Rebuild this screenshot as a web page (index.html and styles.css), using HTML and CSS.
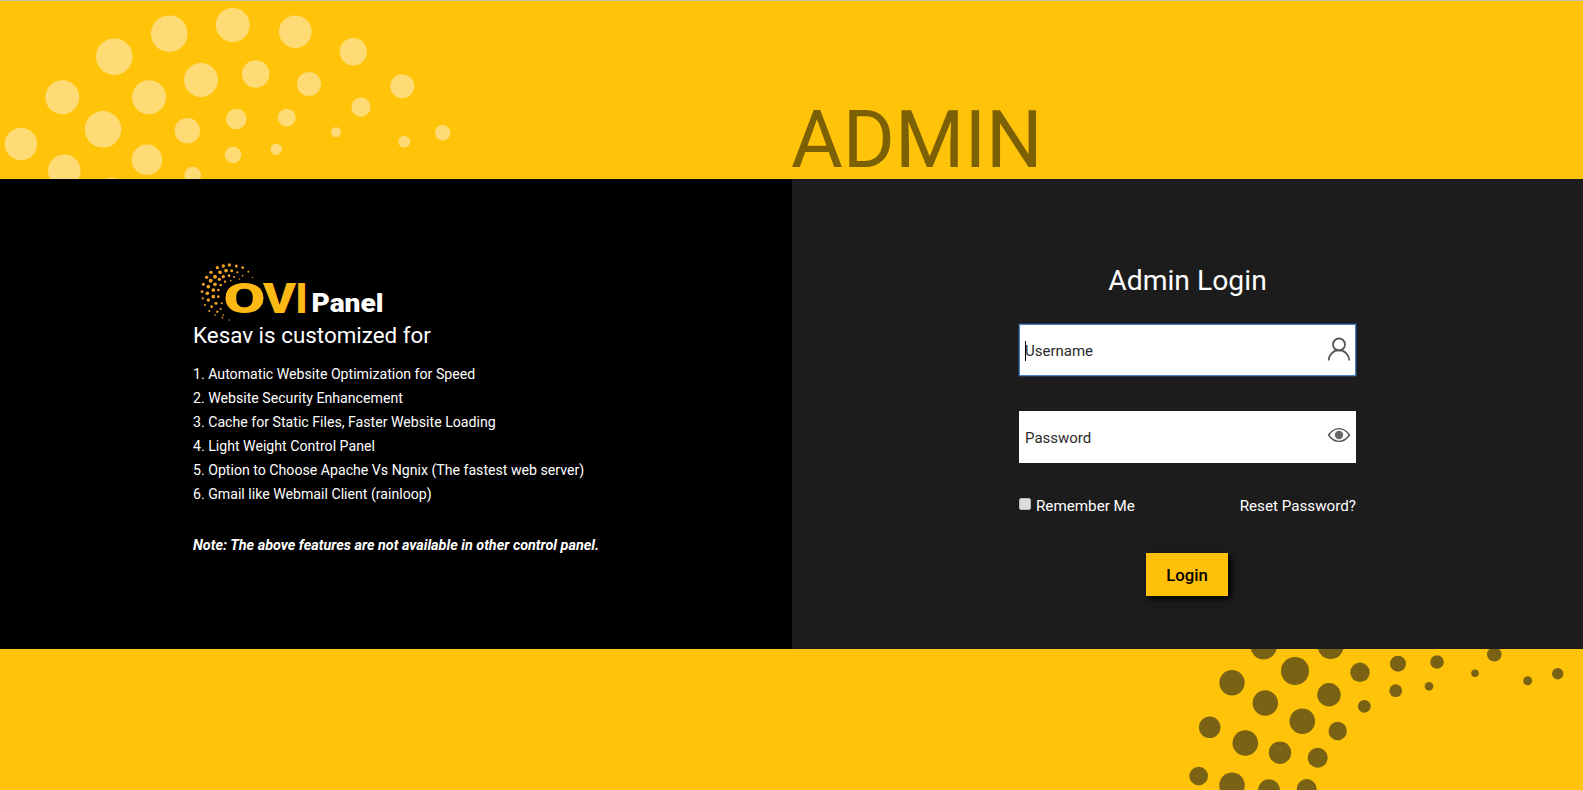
FILE: index.html
```html
<!DOCTYPE html>
<html lang="en">
<head>
<meta charset="utf-8">
<title>Admin Login</title>
<link rel="stylesheet" href="styles.css">
</head>
<body>
<div class="page">
  <header class="band band-top">
    <svg class="dots dots-light" viewBox="0 0 470 178" width="470" height="178" aria-hidden="true">
      <g transform="translate(0,-1)">
      <circle cx="21" cy="144" r="16.3"/><circle cx="62.3" cy="97.3" r="17"/><circle cx="114.3" cy="56.7" r="18.3"/><circle cx="169.3" cy="33.7" r="18.3"/><circle cx="232.7" cy="25" r="17"/><circle cx="295.3" cy="31.7" r="16.3"/><circle cx="353.3" cy="51.7" r="13.7"/><circle cx="402.3" cy="86.3" r="12"/><circle cx="442.7" cy="132.7" r="7.7"/><circle cx="404.3" cy="141.7" r="6"/><circle cx="361" cy="107" r="9.7"/><circle cx="336" cy="132.3" r="5"/><circle cx="309" cy="84" r="12"/><circle cx="286.7" cy="117.7" r="9"/><circle cx="276.3" cy="149.3" r="5.7"/><circle cx="255.7" cy="74" r="13.7"/><circle cx="236.3" cy="119" r="10.3"/><circle cx="233" cy="155" r="8.3"/><circle cx="201" cy="80" r="17"/><circle cx="149" cy="97.3" r="17"/><circle cx="103" cy="129.3" r="18.3"/><circle cx="187.3" cy="130.7" r="12.7"/><circle cx="147" cy="159.7" r="15.3"/><circle cx="64.3" cy="170.7" r="16.3"/><circle cx="192.7" cy="175" r="8.3"/><circle cx="111.7" cy="186.7" r="9"/>
      </g>
    </svg>
    <h1 class="band-title">ADMIN</h1>
  </header>

  <main class="main">
    <section class="info">
      <svg class="logo" viewBox="3 0 210 67" width="210" height="67" role="img" aria-label="OVI Panel">
        <g class="logo-dots" transform="scale(.33333)">
          <circle cx="118" cy="30" r="5"/><circle cx="100" cy="33" r="5"/><circle cx="82" cy="38" r="5"/><circle cx="63" cy="52" r="5"/><circle cx="50" cy="67" r="5"/><circle cx="40" cy="88" r="4.5"/><circle cx="36" cy="110" r="4"/><circle cx="38" cy="130" r="3.5"/><circle cx="45" cy="150" r="3"/><circle cx="58" cy="168" r="3"/><circle cx="75" cy="180" r="2.5"/><circle cx="97" cy="188" r="2.5"/><circle cx="118" cy="195" r="2"/><circle cx="139" cy="33" r="4.5"/><circle cx="158" cy="38" r="4"/><circle cx="175" cy="50" r="3"/><circle cx="188" cy="67" r="2"/>
          <circle cx="108" cy="47" r="5.5"/><circle cx="90" cy="52" r="5.5"/><circle cx="75" cy="65" r="6"/><circle cx="62" cy="77" r="6"/><circle cx="55" cy="95" r="5.5"/><circle cx="52" cy="115" r="5.5"/><circle cx="55" cy="135" r="5"/><circle cx="65" cy="155" r="4"/><circle cx="82" cy="170" r="3.5"/><circle cx="100" cy="180" r="2.5"/><circle cx="125" cy="47" r="4.5"/><circle cx="142" cy="52" r="3.5"/><circle cx="158" cy="62" r="2.5"/>
          <circle cx="100" cy="65" r="5"/><circle cx="88" cy="73" r="5"/><circle cx="75" cy="88" r="5.5"/><circle cx="70" cy="105" r="5.5"/><circle cx="70" cy="125" r="5.5"/><circle cx="78" cy="145" r="4.5"/><circle cx="92" cy="162" r="3"/><circle cx="117" cy="62" r="4"/><circle cx="132" cy="66" r="3"/><circle cx="148" cy="72" r="2"/>
          <circle cx="105" cy="80" r="3.5"/><circle cx="92" cy="90" r="4"/><circle cx="85" cy="105" r="4"/><circle cx="85" cy="125" r="4"/><circle cx="95" cy="145" r="3"/><circle cx="122" cy="77" r="2.5"/>
        </g>
        <text class="logo-ovi" x="33.5" y="58" textLength="42" lengthAdjust="spacingAndGlyphs">O</text>
        <text class="logo-ovi" x="73" y="58" textLength="33" lengthAdjust="spacingAndGlyphs">V</text>
        <text class="logo-ovi" x="105.5" y="58" textLength="12" lengthAdjust="spacingAndGlyphs">I</text>
        <text class="logo-panel" x="121.5" y="57" textLength="72" lengthAdjust="spacingAndGlyphs">Panel</text>
      </svg>
      <h2 class="info-title">Kesav is customized for</h2>
      <ol class="features">
        <li>1. Automatic Website Optimization for Speed</li>
        <li>2. Website Security Enhancement</li>
        <li>3. Cache for Static Files, Faster Website Loading</li>
        <li>4. Light Weight Control Panel</li>
        <li>5. Option to Choose Apache Vs Ngnix (The fastest web server)</li>
        <li>6. Gmail like Webmail Client (rainloop)</li>
      </ol>
      <p class="note">Note: The above features are not available in other control panel.</p>
    </section>

    <section class="login">
      <form class="login-form">
        <h2 class="login-title">Admin Login</h2>
        <div class="field field-focus">
          <input class="field-input" type="text" placeholder="Username" aria-label="Username">
          <span class="caret"></span>
          <svg class="field-icon" viewBox="0 0 24 24" width="24" height="24" aria-hidden="true">
            <circle cx="12" cy="7.5" r="6"/>
            <path d="M1.6 23.5C2 17.5 6.5 13.2 12 13.2S22 17.5 22.4 23.5"/>
          </svg>
        </div>
        <div class="field">
          <input class="field-input" type="password" placeholder="Password" aria-label="Password">
          <svg class="field-icon" viewBox="0 0 24 24" width="24" height="24" aria-hidden="true">
            <path class="thin" d="M1.5 12C4.5 7.8 8 5.6 12 5.6S19.5 7.8 22.5 12C19.5 16.2 16 18.4 12 18.4S4.5 16.2 1.5 12Z"/>
            <circle class="solid" cx="12" cy="12" r="4.2"/>
          </svg>
        </div>
        <div class="options">
          <label class="remember"><input class="check" type="checkbox"> Remember Me</label>
          <a class="reset" href="#">Reset Password?</a>
        </div>
        <div class="actions"><button class="login-btn" type="button">Login</button></div>
      </form>
    </section>
  </main>

  <footer class="band band-bottom">
    <svg class="dots dots-dark" viewBox="1160 649 423 141" width="423" height="141" aria-hidden="true">
      <circle cx="1263.7" cy="646" r="13.3"/><circle cx="1330.7" cy="646" r="13"/><circle cx="1295" cy="671" r="14"/><circle cx="1232" cy="682.7" r="12.7"/><circle cx="1265.3" cy="703" r="12.7"/><circle cx="1329" cy="694.7" r="11.7"/><circle cx="1360" cy="672.3" r="9.7"/><circle cx="1398" cy="663.7" r="8"/><circle cx="1437" cy="662" r="6.8"/><circle cx="1494.3" cy="654.3" r="7.3"/><circle cx="1475" cy="673.3" r="3.8"/><circle cx="1527.7" cy="680.7" r="4.5"/><circle cx="1557.7" cy="673.7" r="5.7"/><circle cx="1429" cy="686.3" r="4.3"/><circle cx="1395.7" cy="690.7" r="6.4"/><circle cx="1364.3" cy="706.3" r="6.4"/><circle cx="1302.3" cy="721.3" r="12.8"/><circle cx="1337.7" cy="731" r="9.2"/><circle cx="1209.7" cy="727.3" r="10.8"/><circle cx="1245.3" cy="743" r="12.8"/><circle cx="1280" cy="752.7" r="11.2"/><circle cx="1317.7" cy="757.7" r="10"/><circle cx="1198.7" cy="776" r="9.3"/><circle cx="1232" cy="785.3" r="12.7"/><circle cx="1269" cy="790.3" r="11"/><circle cx="1306.7" cy="789" r="10"/>
    </svg>
  </footer>
</div>
</body>
</html>
```
FILE: styles.css
```css
* { box-sizing: border-box; }
html, body { margin: 0; padding: 0; }
body { font-family: Roboto, "Liberation Sans", sans-serif; background: #ffc309; overflow: hidden; }
.page { height: 790px; display: flex; flex-direction: column; }

.band { position: relative; background: #ffc309; }
.band-top { height: 179px; border-top: 1px solid #c9c4b0; display: flex; align-items: flex-end; padding-left: 792px; }
.band-bottom { flex: 1; }
.dots { position: absolute; top: 0; }
.dots-light { left: 0; fill: #ffdb75; }
.dots-dark { right: 0; fill: #7a6214; }
.band-title { position: relative; margin: 0 0 0 -1px; font-size: 79.5px; font-weight: 400; line-height: 94px; padding: 0; transform: translateY(8px); color: #7c6104; }

.main { position: relative; height: 470px; display: flex; }
.info { width: 792px; background: #000; color: #fff; padding: 76px 0 0 193px; }
.logo { display: block; }
.logo-dots { fill: #f3a426; }
.logo-ovi { font-family: Roboto, sans-serif; font-weight: 900; font-size: 43px; fill: #fdb913; }
.logo-panel { font-family: Roboto, sans-serif; font-weight: 900; font-size: 26px; fill: #fff; }
.info-title { margin: 0 0 14px; font-size: 22.4px; font-weight: 400; line-height: 26px; }
.features { list-style: none; margin: 0; padding: 0; font-size: 14.15px; line-height: 24px; }
.note { margin: 28px 0 0; font-size: 14.4px; font-weight: 700; font-style: italic; line-height: 24px; }

.login { flex: 1; background: #1c1c1c; display: flex; justify-content: center; }
.login-form { width: 337px; padding-top: 84px; }
.login-title { margin: 0 0 25px; text-align: center; color: #fff; font-size: 28.3px; font-weight: 400; line-height: 36px; }
.field { position: relative; height: 52px; margin-bottom: 35px; background: #fff; }
.field-focus { border: 1px solid #4a7ec8; box-shadow: 0 0 0 1px rgba(74, 126, 200, .25); }
.field-input { width: 100%; height: 100%; border: 0; outline: 0; padding: 2px 40px 0 6px; background: transparent; font: 400 15px Roboto, sans-serif; color: #222; }
.field-focus .field-input { padding-left: 5px; }
.field-input::placeholder { color: #2b2b2b; opacity: 1; }
.caret { position: absolute; left: 5px; top: 16px; width: 1px; height: 20px; background: #000; }
.field-icon { position: absolute; right: 4px; top: 12px; fill: none; stroke: #555; stroke-width: 1.8; }
.field:not(.field-focus) .field-icon { right: 5px; top: 12px; }
.field-icon .thin { stroke-width: 1.4; }
.field-icon .solid { fill: #666; stroke: none; }

.options { display: flex; justify-content: space-between; align-items: center; color: #fff; font-size: 15.2px; line-height: 20px; margin-top: -2px; }
.remember { display: flex; align-items: center; gap: 5px; }
.check { appearance: none; width: 12px; height: 12px; margin: -5px 0 0; background: #dcdcdc; border: 1px solid #bbb; border-radius: 2px; }
.reset { color: #fff; text-decoration: none; }
.actions { display: flex; justify-content: center; margin-top: 37px; }
.login-btn { width: 82px; height: 43px; margin-right: 1px; border: 0; background: #ffc107; color: #000; font: 500 16.8px Roboto, sans-serif; box-shadow: 3px 3px 6px #000; }
```
